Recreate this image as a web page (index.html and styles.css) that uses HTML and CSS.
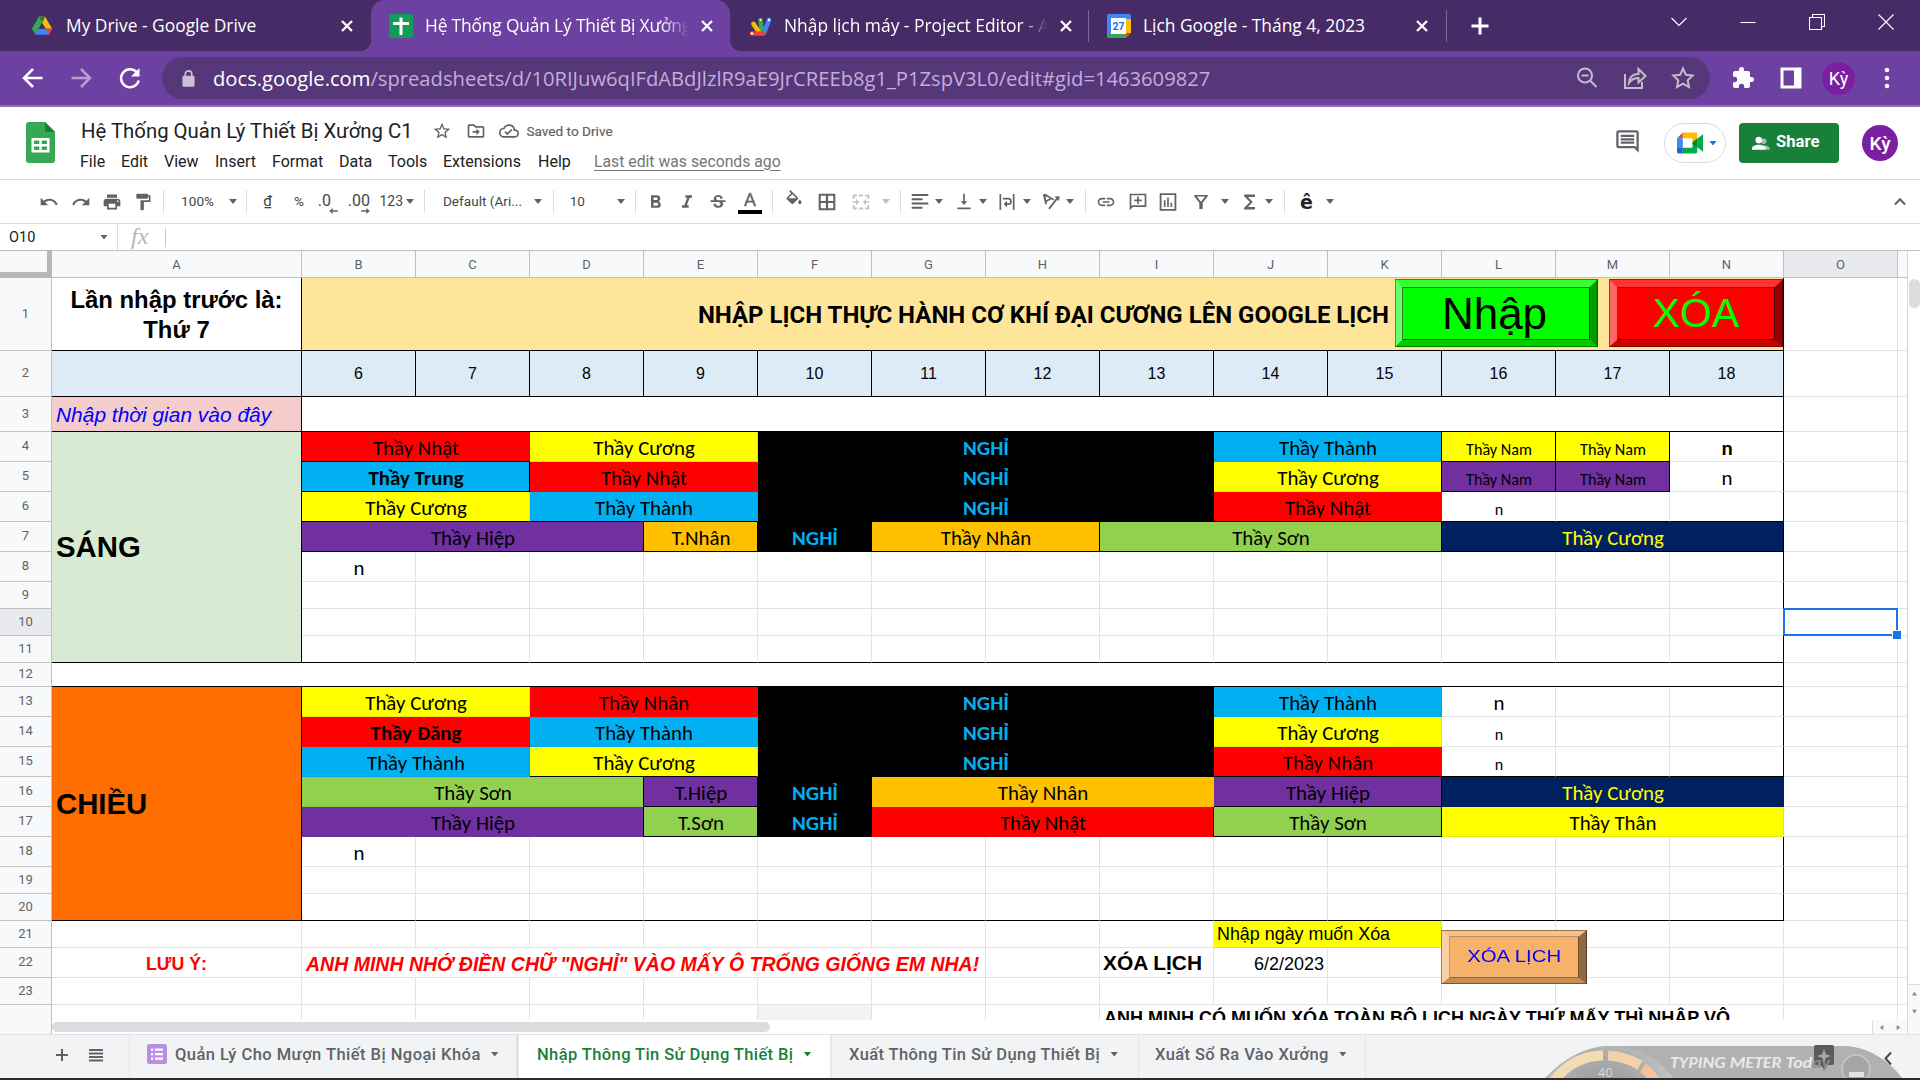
FILE: index.html
```
<!DOCTYPE html>
<html lang="vi">
<head>
<meta charset="utf-8">
<title>Hệ Thống Quản Lý Thiết Bị Xưởng C1</title>
<link rel="stylesheet" href="styles.css">
</head>
<body>
<div class="tabstrip">
  <div class="tab first">
    <svg class="fav" viewBox="0 0 24 24"><path fill="#34a853" d="M8.5 2h3.5l3.6 6.500-3.600 0L4.600 21 1 15z"/><path fill="#fbbc04" d="M8.500 2h7L23 15h-7z"/><path fill="#4285f4" d="M8 15h15l-3.500 6.500h-15z"/><path fill="#ea4335" d="M16 15h7l-3.500 6.500z"/><path fill="#188038" d="M8.500 2h7L12 8.500z"/><path fill="#472b66" d="M12 9.500l3 5.500H9z"/></svg>
    <span class="tt">My Drive - Google Drive</span>
    <svg class="x" viewBox="0 0 14 14"><path d="M2 2l10 10M12 2L2 12"/></svg>
  </div>
  <div class="tab active">
    <svg class="fav" viewBox="0 0 24 24"><rect width="24" height="24" rx="2.500" fill="#109d58"/><path fill="#fff" d="M10.500 3.500h3v4.500H20v3h-6.500v10h-3V11H4V8h6.500z"/></svg>
    <span class="tt fade tight">Hệ Thống Quản Lý Thiết Bị Xưởng</span>
    <svg class="x" viewBox="0 0 14 14"><path d="M2 2l10 10M12 2L2 12"/></svg>
  </div>
  <div class="tab line">
    <svg class="fav" viewBox="0 0 24 24"><g stroke-linecap="round" stroke-width="4.600" fill="none"><path stroke="#4285f4" d="M16 19L21 6"/><path stroke="#34a853" d="M14 18L12.500 6"/><path stroke="#fbbc04" d="M11 18L5.500 10"/><path stroke="#ea4335" d="M4 19.500h11"/></g><g fill="#fff"><circle cx="21" cy="6" r="1.200"/><circle cx="12.500" cy="6" r="1"/><circle cx="4" cy="19.500" r="1.200"/></g></svg>
    <span class="tt fade">Nhập lịch máy - Project Editor - A</span>
    <svg class="x" viewBox="0 0 14 14"><path d="M2 2l10 10M12 2L2 12"/></svg>
  </div>
  <div class="tab line">
    <svg class="fav" viewBox="0 0 24 24"><path fill="#4285f4" d="M2 0h20a2 2 0 0 1 2 2v3H5v19H2a2 2 0 0 1-2-2V2a2 2 0 0 1 2-2z"/><path fill="#34a853" d="M0 19h19v5H2a2 2 0 0 1-2-2z"/><path fill="#fbbc04" d="M19 5h5v14h-5z"/><path fill="#ea4335" d="M19 19h5l-5 5z"/><path fill="#fff" d="M4 4h15v16H4z"/><text x="11.500" y="16" text-anchor="middle" font-family="Roboto,sans-serif" font-weight="700" font-size="10.500" fill="#1a73e8">27</text></svg>
    <span class="tt">Lịch Google - Tháng 4, 2023</span>
    <svg class="x" viewBox="0 0 14 14"><path d="M2 2l10 10M12 2L2 12"/></svg>
  </div>
  <svg class="plus" viewBox="0 0 20 20"><path d="M10 1.500v17M1.500 10h17"/></svg>
  <div class="win">
    <svg viewBox="0 0 16 16"><path d="M.5 4L8 11.500 15.500 4"/></svg>
    <svg viewBox="0 0 16 16"><path d="M.5 8.500h15"/></svg>
    <svg viewBox="0 0 16 16"><path d="M.5 3.500h12v12H.5zM3.500 3.500v-3h12v12h-3"/></svg>
    <svg viewBox="0 0 16 16"><path d="M.5.500l15 15M15.500.500l-15 15"/></svg>
  </div>
</div>
<div class="nav">
  <svg class="w" viewBox="0 0 24 24"><path d="M21.500 12H3.500M12 3L3 12l9 9"/></svg>
  <svg class="w dim" viewBox="0 0 24 24"><path d="M2.500 12h18M12 3l9 9-9 9"/></svg>
  <svg class="w" viewBox="0 0 24 24"><path d="M19 6.500A9 9 0 1 0 20.800 14.500"/><path d="M21.500 2v8.500H13z" class="solid"/></svg>
  <div class="url">
    <svg class="lock" viewBox="0 0 14 20"><path fill="#c9c0d6" d="M2 7h10a1.500 1.500 0 0 1 1.500 1.500v9A1.500 1.500 0 0 1 12 19H2a1.500 1.500 0 0 1-1.500-1.500v-9A1.500 1.500 0 0 1 2 7z"/><path fill="none" stroke="#c9c0d6" stroke-width="1.800" d="M3.500 8V5.200a3.500 3.500 0 0 1 7 0V8"/></svg>
    <span class="addr"><b>docs.google.com</b>/spreadsheets/d/10RIJuw6qIFdABdJlzlR9aE9JrCREEb8g1_P1ZspV3L0/edit#gid=1463609827</span>
    <svg class="u" viewBox="0 0 24 24"><circle cx="10" cy="9.500" r="7"/><path d="M15.500 15l6 6M6.500 9.500h7"/></svg>
    <svg class="u" viewBox="0 0 24 24"><path d="M2 8v14h17v-6M6 17c.5-6 4-9 9.500-9V3l7 7-7 6.500V12c-4 0-7 1.500-9.500 5z"/></svg>
    <svg class="u" viewBox="0 0 24 24"><path d="M12 2.500l2.900 6.300 6.800.8-5 4.700 1.300 6.800L12 17.700 6 21.100l1.300-6.800-5-4.700 6.800-.8z"/></svg>
  </div>
  <svg class="f" viewBox="0 0 24 24"><path d="M20.500 11H19V7c0-1.100-.9-2-2-2h-4V3.500a2.500 2.500 0 0 0-5 0V5H4c-1.100 0-2 .9-2 2v3.800h1.500a2.700 2.700 0 0 1 0 5.400H2V20c0 1.100.9 2 2 2h3.800v-1.500a2.700 2.700 0 0 1 5.400 0V22H17c1.100 0 2-.9 2-2v-4h1.500a2.500 2.500 0 0 0 0-5z"/></svg>
  <svg class="f" viewBox="0 0 24 24"><path fill-rule="evenodd" d="M1.500 1.500h21v21h-21zM4.500 4.500v15H15v-15z"/></svg>
  <div class="av small">Kỳ</div>
  <svg class="f" viewBox="0 0 24 24"><circle cx="12" cy="4" r="2.300"/><circle cx="12" cy="12" r="2.300"/><circle cx="12" cy="20" r="2.300"/></svg>
</div>
<div class="dochead">
  <svg class="logo" viewBox="0 0 29 41"><path fill="#34a853" d="M3 0h16l10 10v28a3 3 0 0 1-3 3H3a3 3 0 0 1-3-3V3a3 3 0 0 1 3-3z"/><path fill="#188038" d="M19 0l10 10H19z"/><path fill="#fff" fill-rule="evenodd" d="M5.500 16h18v14.500h-18zM8 18.500v3.500h5.300v-3.500zM15.700 18.500v3.500H21v-3.500zM8 24.500V28h5.300v-3.500zM15.700 24.500V28H21v-3.500z"/></svg>
  <div class="docmid">
    <div class="trow">
      <span class="dtitle">Hệ Thống Quản Lý Thiết Bị Xưởng C1</span>
      <svg class="g" viewBox="0 0 24 24"><path d="M22 9.240l-7.190-.62L12 2 9.190 8.630 2 9.240l5.460 4.730L5.820 21 12 17.270 18.180 21l-1.630-7.030L22 9.240zM12 15.400l-3.760 2.270 1-4.280-3.320-2.880 4.380-.38L12 6.100l1.710 4.040 4.380.38-3.320 2.880 1 4.280L12 15.400z"/></svg>
      <svg class="g" viewBox="0 0 24 24"><path d="M20 6h-8l-2-2H4c-1.100 0-2 .9-2 2v12c0 1.100.9 2 2 2h16c1.100 0 2-.9 2-2V8c0-1.100-.9-2-2-2zm0 12H4V6h5.170l2 2H20v10zm-7.500-1l4-4-4-4v3H8v2h4.500z"/></svg>
      <svg class="g" viewBox="0 0 24 24"><path d="M19.350 10.040A7.490 7.490 0 0 0 12 4C9.110 4 6.600 5.640 5.350 8.040A5.990 5.990 0 0 0 0 14c0 3.310 2.690 6 6 6h13c2.760 0 5-2.240 5-5 0-2.640-2.050-4.780-4.650-4.960zM19 18H6a4 4 0 0 1 0-8h.71a5.500 5.500 0 0 1 10.790 1.500v.5H19a3 3 0 0 1 0 6zm-9-3.820l-2.090-2.090L6.500 13.500 10 17l6.010-6.010-1.410-1.410z"/></svg>
      <span class="saved">Saved to Drive</span>
    </div>
    <div class="menus"><span>File</span><span>Edit</span><span>View</span><span>Insert</span><span>Format</span><span>Data</span><span>Tools</span><span>Extensions</span><span>Help</span><span class="last">Last edit was seconds ago</span></div>
  </div>
  <div class="docright">
    <svg class="cm" viewBox="0 0 24 24"><path fill="#5f6368" d="M21.990 4c0-1.100-.89-2-1.990-2H4c-1.100 0-2 .9-2 2v12c0 1.100.9 2 2 2h14l4 4-.01-18zM20 4v13.170L18.830 16H4V4h16zM6 12h12v2H6zm0-3h12v2H6zm0-3h12v2H6z"/></svg>
    <div class="meet"><svg viewBox="0 0 28 22"><path fill="#ea4335" d="M6 0v6H0z"/><path fill="#fbbc04" d="M6 0h13a2 2 0 0 1 2 2v7l-5 3V6H6z"/><path fill="#4285f4" d="M0 6h6v10H0z"/><path fill="#1967d2" d="M0 16h6v6H2a2 2 0 0 1-2-2z"/><path fill="#00ac47" d="M6 16h10v-5l5 3v6a2 2 0 0 1-2 2H6z"/><path fill="#00832d" d="M15.500 11L21 6v10z"/><path fill="#00ac47" d="M21 6.500L27 2v18l-6-4.500z"/></svg><i class="car blue"></i></div>
    <div class="share"><svg viewBox="0 0 20 16"><g fill="#fff"><g opacity=".55"><circle cx="13" cy="5.500" r="3"/><path d="M13 10c4 0 6.500 1.500 6.500 3.500V15H14z"/></g><circle cx="7.500" cy="4.200" r="3.700"/><path d="M0 15v-1.500C0 11 4 9.500 7.500 9.500S15 11 15 13.500V15z"/></g></svg>Share</div>
    <div class="av">Kỳ</div>
  </div>
</div>
<div class="tools">
  <svg viewBox="0 0 24 24"><path d="M12.500 8c-2.650 0-5.050.99-6.900 2.600L2 7v9h9l-3.620-3.620c1.390-1.160 3.160-1.880 5.120-1.880 3.540 0 6.550 2.310 7.600 5.500l2.370-.78C21.080 11.030 17.150 8 12.500 8z"/></svg>
  <svg viewBox="0 0 24 24"><path d="M18.400 10.600C16.550 8.990 14.150 8 11.500 8c-4.650 0-8.580 3.030-9.960 7.220L3.900 16a8.002 8.002 0 0 1 7.600-5.500c1.950 0 3.730.72 5.120 1.880L13 16h9V7l-3.600 3.600z"/></svg>
  <svg viewBox="0 0 24 24"><path d="M19 8H5c-1.660 0-3 1.340-3 3v6h4v4h12v-4h4v-6c0-1.660-1.340-3-3-3zm-3 11H8v-5h8v5zm3-7c-.55 0-1-.45-1-1s.45-1 1-1 1 .45 1 1-.45 1-1 1zm-1-9H6v4h12V3z"/></svg>
  <svg viewBox="0 0 24 24"><path d="M18 4V3c0-.55-.45-1-1-1H5c-.55 0-1 .45-1 1v4c0 .55.450 1 1 1h12c.55 0 1-.45 1-1V6h1v4H9v11c0 .55.450 1 1 1h2c.55 0 1-.45 1-1v-9h8V4h-3z"/></svg>
  <i class="sep"></i><span>100%</span><i class="car"></i><i class="sep"></i>
  <span class="dong">₫</span><span>%</span>
  <span class="dec">.0<svg viewBox="0 0 10 7"><path d="M4 0v2.500h6v2H4V7L0 3.500z"/></svg></span>
  <span class="dec">.00<svg viewBox="0 0 10 7"><path d="M6 0v2.500H0v2h6V7l4-3.500z"/></svg></span>
  <span class="n123">123</span><i class="car"></i><i class="sep"></i>
  <span>Default (Ari...</span><i class="car"></i><i class="sep"></i><span class="n10">10</span><i class="car"></i><i class="sep"></i>
  <svg viewBox="0 0 24 24"><path d="M15.600 10.790c.97-.67 1.650-1.770 1.650-2.790 0-2.260-1.750-4-4-4H6v15h8.040c2.090 0 3.710-1.700 3.710-3.790 0-1.520-.86-2.820-2.150-3.420zM9 6.500h3.500c.83 0 1.500.67 1.500 1.500s-.67 1.500-1.500 1.500H9v-3zm4 10H9v-3.500h4c.97 0 1.750.78 1.750 1.750S13.970 16.500 13 16.500z"/></svg>
  <svg viewBox="0 0 24 24"><path d="M10 4v3h2.210l-3.420 9H6v3h8v-3h-2.210l3.420-9H18V4z"/></svg>
  <svg viewBox="0 0 24 24"><path d="M7.240 9.750c-.26-.46-.4-1-.4-1.600 0-2.500 2.200-4.650 5.500-4.650 3 0 5.250 1.700 5.250 4.500h-2.900c0-1.300-.85-2.200-2.400-2.200-1.500 0-2.500.75-2.500 2 0 .9.700 1.500 1.900 1.950zM21 12v-2H3v2h9.620c1.700.6 2.500 1.300 2.500 2.500 0 1.300-1 2.100-2.700 2.100-1.900 0-3-.9-3-2.600H6.500c0 3.300 2.600 5 5.900 5 3.400 0 5.700-1.700 5.700-4.500 0-.95-.25-1.800-.75-2.500z"/></svg>
  <span class="acol">A</span><i class="sep"></i>
  <svg class="up" viewBox="0 0 24 24"><path d="M16.560 8.940L7.620 0 6.210 1.410l2.380 2.380-5.150 5.150a1.490 1.490 0 0 0 0 2.120l5.500 5.500c.29.290.68.440 1.060.44s.77-.15 1.060-.44l5.500-5.500c.59-.58.59-1.530 0-2.120zM5.210 10L10 5.210 14.790 10zM19 11.500s-2 2.170-2 3.500c0 1.100.9 2 2 2s2-.9 2-2c0-1.330-2-3.500-2-3.500z"/></svg>
  <svg viewBox="0 0 24 24"><path d="M2 2v20h20V2H2zm8.600 17.500H4.500v-6.200h6.100zm0-8.800H4.500V4.500h6.100zm8.900 8.800h-6.200v-6.200h6.200zm0-8.800h-6.200V4.500h6.200z"/></svg>
  <svg class="off" viewBox="0 0 24 24"><path d="M2 3h5v2.500H4.500V8H2zM9.500 3h5v2.500h-5zM17 3h5v5h-2.500V5.500H17zM2 16h2.500v2.500H7V21H2zM9.500 18.500h5V21h-5zM19.500 16H22v5h-5v-2.500h2.500zM2 11h4V8.500l4 3.500-4 3.500V13H2zM22 11h-4V8.500L14 12l4 3.500V13h4z"/></svg>
  <i class="car off"></i><i class="sep"></i>
  <svg viewBox="0 0 24 24"><path d="M2 2.500h20v2.200H2zM2 7.600h13v2.200H2zM2 12.700h20v2.200H2zM2 17.800h13V20H2z"/></svg><i class="car"></i>
  <svg viewBox="0 0 24 24"><path d="M16 11h-3V2h-2v9H8l4 4.500zM4 18.500v2.300h16v-2.300z"/></svg><i class="car"></i>
  <svg viewBox="0 0 24 24"><path d="M3 2.500h2v19H3zM19 2.500h2v19h-2zM7 7h6.500a4.200 4.200 0 0 1 0 8.500H12v3L8 14.500l4-4v3h1.500a2.200 2.200 0 0 0 0-4.500H7z"/></svg><i class="car"></i>
  <svg viewBox="0 0 24 24"><path d="M1 3l3 12 2-.6-.5-2.400L11.400 8.600l1.800 1.600 1.500-1.500L4 2zm3.200 2L9.500 7.500 5 10zM21 5l-6 .5 2 2L7.500 19.500l1.700 1.400L18.600 9l2 2z"/></svg><i class="car"></i><i class="sep"></i>
  <svg viewBox="0 0 24 24"><path d="M3.900 12c0-1.710 1.390-3.100 3.100-3.100h4V7H7c-2.760 0-5 2.240-5 5s2.240 5 5 5h4v-1.900H7c-1.710 0-3.100-1.390-3.100-3.100zM8 13h8v-2H8v2zm9-6h-4v1.900h4c1.710 0 3.100 1.390 3.100 3.100s-1.390 3.100-3.100 3.100h-4V17h4c2.760 0 5-2.240 5-5s-2.240-5-5-5z"/></svg>
  <svg viewBox="0 0 24 24"><path d="M22 2H2v20l4-4h16zM20 16H5.200L4 17.200V4h16zM11 5.500h2V9h3.500v2H13v3.500h-2V11H7.500V9H11z"/></svg>
  <svg viewBox="0 0 24 24"><path fill-rule="evenodd" d="M2 1.500h20v21H2zM4.200 3.700v16.600h15.600V3.700zM7 10h2v8H7zM11 6.500h2V18h-2zM15 13h2v5h-2z"/></svg>
  <svg viewBox="0 0 24 24"><path fill-rule="evenodd" d="M4 3.500h16v2L14 13v7.500h-4V13L4 5.500zM7 5.500l5 6.300 5-6.300z"/></svg><i class="car"></i>
  <svg viewBox="0 0 24 24"><path d="M18 3H5v2.200L12 12l-7 6.800V21h13v-3H9.500l5.800-6L9.500 6H18z"/></svg><i class="car"></i><i class="sep"></i>
  <span class="ee">ê</span><i class="car"></i>
  <svg viewBox="0 0 24 24"><path d="M12 7l-7 7 1.800 1.800L12 10.600l5.200 5.200L19 14z"/></svg>
</div>
<div class="fbar"><span class="nm">O10</span><i class="car"></i><i class="ln"></i><span class="fx">fx</span><i class="ln s"></i></div>
<div class="mid">
<div class="sheet">
  <b class="corner"></b><b class="ch">A</b><b class="ch">B</b><b class="ch">C</b><b class="ch">D</b><b class="ch">E</b><b class="ch">F</b><b class="ch">G</b><b class="ch">H</b><b class="ch">I</b><b class="ch">J</b><b class="ch">K</b><b class="ch">L</b><b class="ch">M</b><b class="ch">N</b><b class="ch sel">O</b><b class="ch nr"></b>

  <b class="rh">1</b><div class="c k big2">Lần nhập trước là:<br>Thứ 7</div><div class="c k s13 cream title">NHẬP LỊCH THỰC HÀNH CƠ KHÍ ĐẠI CƯƠNG LÊN GOOGLE LỊCH</div><i class="c"></i><i class="c nr"></i>
  <b class="rh">2</b><div class="c k ice"></div><div class="c k ice">6</div><div class="c k ice">7</div><div class="c k ice">8</div><div class="c k ice">9</div><div class="c k ice">10</div><div class="c k ice">11</div><div class="c k ice">12</div><div class="c k ice">13</div><div class="c k ice">14</div><div class="c k ice">15</div><div class="c k ice">16</div><div class="c k ice">17</div><div class="c k ice">18</div><i class="c"></i><i class="c nr"></i>
  <b class="rh">3</b><div class="c k pink">Nhập thời gian vào đây</div><div class="c k s13"></div><i class="c"></i><i class="c nr"></i>

  <b class="rh">4</b><div class="c k mint r8 big">SÁNG</div><div class="c t s2 red kb">Thầy Nhật</div><div class="c t s2 yel">Thầy Cương</div><div class="c t s4 blk">NGHỈ</div><div class="c t s2 sky kr">Thầy Thành</div><div class="c t yel k sm">Thầy Nam</div><div class="c t yel k sm">Thầy Nam</div><div class="c t kr bold">n</div><i class="c"></i><i class="c nr"></i>
  <b class="rh">5</b><div class="c t s2 sky k bold">Thầy Trung</div><div class="c t s2 red">Thầy Nhật</div><div class="c t s4 blk">NGHỈ</div><div class="c t s2 yel kr">Thầy Cương</div><div class="c t pur k sm">Thầy Nam</div><div class="c t pur k sm">Thầy Nam</div><div class="c t kr">n</div><i class="c"></i><i class="c nr"></i>
  <b class="rh">6</b><div class="c t s2 yel kb">Thầy Cương</div><div class="c t s2 sky kb">Thầy Thành</div><div class="c t s4 blk">NGHỈ</div><div class="c t s2 red kb">Thầy Nhật</div><div class="c t kb sm">n</div><i class="c kb"></i><i class="c k"></i><i class="c"></i><i class="c nr"></i>
  <b class="rh">7</b><div class="c t s3 pur k">Thầy Hiệp</div><div class="c t org k">T.Nhân</div><div class="c t blk">NGHỈ</div><div class="c t s2 org k">Thầy Nhân</div><div class="c t s3 grn k">Thầy Sơn</div><div class="c t s3 navy k">Thầy Cương</div><i class="c"></i><i class="c nr"></i>
  <b class="rh">8</b><div class="c t">n</div><i class="c"></i><i class="c"></i><i class="c"></i><i class="c"></i><i class="c"></i><i class="c"></i><i class="c"></i><i class="c"></i><i class="c"></i><i class="c"></i><i class="c"></i><i class="c kr"></i><i class="c"></i><i class="c nr"></i>
  <b class="rh">9</b><i class="c"></i><i class="c"></i><i class="c"></i><i class="c"></i><i class="c"></i><i class="c"></i><i class="c"></i><i class="c"></i><i class="c"></i><i class="c"></i><i class="c"></i><i class="c"></i><i class="c kr"></i><i class="c"></i><i class="c nr"></i>
  <b class="rh sel">10</b><i class="c"></i><i class="c"></i><i class="c"></i><i class="c"></i><i class="c"></i><i class="c"></i><i class="c"></i><i class="c"></i><i class="c"></i><i class="c"></i><i class="c"></i><i class="c"></i><i class="c kr"></i><i class="c cursor"></i><i class="c nr"></i>
  <b class="rh">11</b><i class="c kb"></i><i class="c kb"></i><i class="c kb"></i><i class="c kb"></i><i class="c kb"></i><i class="c kb"></i><i class="c kb"></i><i class="c kb"></i><i class="c kb"></i><i class="c kb"></i><i class="c kb"></i><i class="c kb"></i><i class="c k"></i><i class="c"></i><i class="c nr"></i>
  <b class="rh">12</b><div class="c k s14"></div><i class="c"></i><i class="c nr"></i>

  <b class="rh">13</b><div class="c k tang r8 big">CHIỀU</div><div class="c t s2 yel">Thầy Cương</div><div class="c t s2 red">Thầy Nhân</div><div class="c t s4 blk">NGHỈ</div><div class="c t s2 sky">Thầy Thành</div><div class="c t">n</div><i class="c"></i><i class="c kr"></i><i class="c"></i><i class="c nr"></i>
  <b class="rh">14</b><div class="c t s2 red bold">Thầy Đăng</div><div class="c t s2 sky">Thầy Thành</div><div class="c t s4 blk">NGHỈ</div><div class="c t s2 yel">Thầy Cương</div><div class="c t sm">n</div><i class="c"></i><i class="c kr"></i><i class="c"></i><i class="c nr"></i>
  <b class="rh">15</b><div class="c t s2 sky">Thầy Thành</div><div class="c t s2 yel hk">Thầy Cương</div><div class="c t s4 blk">NGHỈ</div><div class="c t s2 red kb">Thầy Nhân</div><div class="c t kb sm">n</div><i class="c kb"></i><i class="c k"></i><i class="c"></i><i class="c nr"></i>
  <b class="rh">16</b><div class="c t s3 grn kr">Thầy Sơn</div><div class="c t pur k">T.Hiệp</div><div class="c t blk">NGHỈ</div><div class="c t s3 org">Thầy Nhân</div><div class="c t s2 pur k">Thầy Hiệp</div><div class="c t s3 navy">Thầy Cương</div><i class="c"></i><i class="c nr"></i>
  <b class="rh">17</b><div class="c t s3 pur kr">Thầy Hiệp</div><div class="c t grn k">T.Sơn</div><div class="c t blk">NGHỈ</div><div class="c t s3 red kr">Thầy Nhật</div><div class="c t s2 grn k">Thầy Sơn</div><div class="c t s3 yel">Thầy Thân</div><i class="c"></i><i class="c nr"></i>
  <b class="rh">18</b><div class="c t">n</div><i class="c"></i><i class="c"></i><i class="c"></i><i class="c"></i><i class="c"></i><i class="c"></i><i class="c"></i><i class="c"></i><i class="c"></i><i class="c"></i><i class="c"></i><i class="c kr"></i><i class="c"></i><i class="c nr"></i>
  <b class="rh">19</b><i class="c"></i><i class="c"></i><i class="c"></i><i class="c"></i><i class="c"></i><i class="c"></i><i class="c"></i><i class="c"></i><i class="c"></i><i class="c"></i><i class="c"></i><i class="c"></i><i class="c kr"></i><i class="c"></i><i class="c nr"></i>
  <b class="rh">20</b><i class="c kb"></i><i class="c kb"></i><i class="c kb"></i><i class="c kb"></i><i class="c kb"></i><i class="c kb"></i><i class="c kb"></i><i class="c kb"></i><i class="c kb"></i><i class="c kb"></i><i class="c kb"></i><i class="c kb"></i><i class="c k"></i><i class="c"></i><i class="c nr"></i>

  <b class="rh">21</b><i class="c"></i><i class="c"></i><i class="c"></i><i class="c"></i><i class="c"></i><i class="c"></i><i class="c"></i><i class="c"></i><i class="c"></i><div class="c s2 yel del">Nhập ngày muốn Xóa</div><i class="c"></i><i class="c"></i><i class="c"></i><i class="c"></i><i class="c nr"></i>
  <b class="rh">22</b><div class="c note">LƯU Ý:</div><div class="c s6 warn">ANH MINH NHỚ ĐIỀN CHỮ "NGHỈ" VÀO MẤY Ô TRỐNG GIỐNG EM NHA!</div><i class="c"></i><div class="c xl">XÓA LỊCH</div><div class="c date">6/2/2023</div><i class="c"></i><i class="c"></i><i class="c"></i><i class="c"></i><i class="c"></i><i class="c nr"></i>
  <b class="rh">23</b><i class="c"></i><i class="c"></i><i class="c"></i><i class="c"></i><i class="c"></i><i class="c"></i><i class="c"></i><i class="c"></i><i class="c"></i><i class="c"></i><i class="c"></i><i class="c"></i><i class="c"></i><i class="c"></i><i class="c"></i><i class="c nr"></i>
  <b class="rh nb"></b><i class="c nb"></i><i class="c nb"></i><i class="c nb"></i><i class="c nb"></i><i class="c nb"></i><i class="c nb gray"></i><i class="c nb"></i><i class="c nb"></i><div class="c nb s6 ask">ANH MINH CÓ MUỐN XÓA TOÀN BỘ LỊCH NGÀY THỨ MẤY THÌ NHẬP VÔ</div><i class="c nb"></i><i class="c nb nr"></i>

  <div class="bevel nhap">Nhập</div>
  <div class="bevel xoa">XÓA</div>
  <div class="bevel lich"><span>XÓA LỊCH</span></div>
  <div class="selbox"><i></i></div>
</div>
<div class="vbar"><i class="vth"></i><div class="arrs"><svg viewBox="0 0 10 8"><path d="M5 1l4 6H1z"/></svg><svg viewBox="0 0 10 8"><path d="M5 7l4-6H1z"/></svg></div></div>
</div>
<div class="hbar"><div class="htrack"><i></i></div><div class="harr"><svg viewBox="0 0 8 10"><path d="M1 5l6-4v8z"/></svg><svg viewBox="0 0 8 10"><path d="M7 5L1 1v8z"/></svg></div><div class="hend"></div></div>
<div class="stabs">
  <div class="ctl"><svg viewBox="0 0 16 16"><path d="M7 2h2v5h5v2H9v5H7V9H2V7h5z"/></svg><svg viewBox="0 0 14 14"><path d="M0 1h14v2H0zM0 4.500h14v2H0zM0 8h14v2H0zM0 11.500h14v2H0z"/></svg></div>
  <div class="st t1"><svg class="form" viewBox="0 0 20 20"><rect width="20" height="20" rx="2" fill="#b88fe3"/><path fill="#fff" d="M4 4.500h2.200v2.200H4zM8 4.500h8v2.200H8zM4 9h2.200v2.200H4zM8 9h8v2.200H8zM4 13.500h2.200v2.200H4zM8 13.500h8v2.200H8z"/></svg>Quản Lý Cho Mượn Thiết Bị Ngoại Khóa<i class="car"></i></div>
  <div class="st t2">Nhập Thông Tin Sử Dụng Thiết Bị<i class="car"></i></div>
  <div class="st t3">Xuất Thông Tin Sử Dụng Thiết Bị<i class="car"></i></div>
  <div class="st t4">Xuất Sổ Ra Vào Xưởng<i class="car"></i></div>
  <svg class="meter" viewBox="0 0 365 33"><defs><radialGradient id="dial" gradientUnits="userSpaceOnUse" cx="60" cy="54" r="68"><stop offset="0" stop-color="#909193"/><stop offset=".72" stop-color="#aeb0b1"/><stop offset="1" stop-color="#bfc1c3"/></radialGradient></defs><path fill="#b0b1b3" d="M0 33C20 12 42 2 62 1H300C325 2 346 18 357 33z"/><path fill="url(#dial)" d="M0 33C20 12 42 2 62 1c30 0 50 12 66 32z"/><path fill="none" stroke="#f2dcb2" stroke-width="10" d="M9 36C21 20 38 11 58 10.500"/><path fill="none" stroke="#f4d2a8" stroke-width="10" d="M63 10.500c12 .5 22 4 32 9.500"/><path fill="none" stroke="#f5c29e" stroke-width="10" d="M98 23c6 4 9 8 13 13"/><text x="60.500" y="32" text-anchor="middle" font-family="Open Sans,sans-serif" font-size="12.500" fill="#dcdcdc">40</text><circle cx="311" cy="24" r="14" fill="#a5a6a8" stroke="#c6c7c9" stroke-width="1.500"/><rect x="304" y="27" width="15" height="5" fill="#e3e3e4"/><path fill="#5b5c5e" d="M271 0h16a2 2 0 0 1 2 2v16a2 2 0 0 1-2 2h-4l-4 4-4-4h-4a2 2 0 0 1-2-2V2a2 2 0 0 1 2-2z"/><path fill="#a7a8aa" d="M279 4l1.800 5.200L286 11l-5.200 1.800L279 18l-1.800-5.200L272 11l5.200-1.800z"/><text class="mt" x="125" y="22.500" textLength="160" lengthAdjust="spacingAndGlyphs">TYPING METER Tod<tspan class="faint">ay</tspan></text><path fill="none" stroke="#444649" stroke-width="2" d="M346 7.500l-5.500 6 5.500 6"/></svg>
</div>
<div class="taskbar"></div>
</body>
</html>
```
FILE: styles.css
```
* { box-sizing: border-box; }
body { margin: 0; width: 1920px; height: 1080px; overflow: hidden; display: flex; flex-direction: column; background: #fff; color: #000; font-family: Roboto, "Liberation Sans", sans-serif; }
svg { display: block; flex: none; }
i { font-style: normal; }

/* browser tab strip */
.tabstrip { height: 51px; background: #462b66; display: flex; flex: none; color: #fff; font: 17.4px "Open Sans", "Noto Sans", sans-serif; }
.tab { width: 359px; height: 51px; display: flex; align-items: center; padding: 0 17px 0 18px; position: relative; }
.tab.first { margin-left: 12px; }
.tab.active { background: #6d41a1; border-radius: 14px 14px 0 0; }
.tab.active::before, .tab.active::after { content: ""; position: absolute; bottom: 0; width: 10px; height: 10px; }
.tab.active::before { left: -10px; background: radial-gradient(circle at 0 0, transparent 9.5px, #6d41a1 10px); }
.tab.active::after { right: -10px; background: radial-gradient(circle at 100% 0, transparent 9.5px, #6d41a1 10px); }
.tab.line { border-right: 1px solid #7d6a94; border-image: linear-gradient(transparent 11px, #7d6a94 11px, #7d6a94 41px, transparent 41px) 1; }
.tab.line + .tab.line { width: 358px; }
.fav { width: 24px; height: 24px; }
.first .fav { width: 22px; height: 22px; margin: 0 1px; }
.tt { margin-left: 12px; width: 264px; white-space: nowrap; padding-bottom: 1px; }
.tt.tight { letter-spacing: -.17px; }
.tt.fade { -webkit-mask-image: linear-gradient(90deg, #000 236px, transparent 264px); mask-image: linear-gradient(90deg, #000 236px, transparent 264px); }
.x { width: 14px; height: 14px; margin-left: 11px; stroke: #fff; stroke-width: 2.3; fill: none; }
.plus { width: 20px; height: 20px; margin: 16px 0 0 23px; stroke: #fff; stroke-width: 3; }
.win { margin-left: auto; padding: 14px 26px 0 0; display: flex; gap: 53px; }
.win svg { width: 16px; height: 16px; stroke: #fff; fill: none; stroke-width: 1.1; }

/* address row */
.nav { height: 56px; flex: none; background: #6d41a1; border-bottom: 2px solid #9069bd; display: grid; grid-template-columns: 45px 48px 49px 1568px 45px 48px 52px 44px; justify-items: end; align-items: center; }
.nav > svg { width: 24px; height: 24px; }
.w { fill: none; stroke: #fff; stroke-width: 2.5; }
.w .solid { fill: #fff; stroke: none; }
.w.dim { opacity: .5; }
.f { fill: #fff; }
.url { width: 1548px; height: 42px; border-radius: 21px; background: #56377a; display: flex; align-items: center; padding: 0 15px 0 20px; }
.lock { width: 13px; height: 19px; }
.addr { margin-left: 18px; width: 1200px; font: 20.18px "Open Sans", "Noto Sans", sans-serif; color: #c1aedb; white-space: nowrap; margin-right: auto; }
.addr b { color: #fff; font-weight: 400; }
.u { width: 24px; height: 24px; margin-left: 24px; fill: none; stroke: #c3bccb; stroke-width: 2; }
.av { width: 36px; height: 36px; border-radius: 50%; background: #7b1fa2; color: #fff; font-size: 19px; font-weight: 500; display: flex; align-items: center; justify-content: center; }
.av.small { width: 33px; height: 33px; font-size: 18px; font-weight: 400; }

/* document header */
.dochead { height: 73px; flex: none; display: flex; border-bottom: 1px solid #dadada; padding-left: 26px; }
.logo { width: 29px; height: 41px; margin-top: 15px; }
.docmid { margin-left: 25px; padding-top: 8px; }
.trow { height: 32px; display: flex; align-items: center; color: #202124; }
.dtitle { font-size: 20.350px; width: 352px; padding-left: 1px; white-space: nowrap; }
.g { width: 20px; height: 20px; fill: #5f6368; margin-right: 13.500px; }
.saved { font-size: 13.600px; color: #5f6368; margin-left: -6px; padding-bottom: 1px; -webkit-text-stroke: .2px #5f6368; }
.menus { height: 28px; display: grid; grid-template-columns: 41px 43px 51px 57px 67px 49px 55px 95px 56px auto; align-items: center; font-size: 16px; color: #202124; white-space: nowrap; }
.menus .last { font-size: 15.780px; color: #757575; text-decoration: underline; text-underline-offset: 3px; }
.docright { margin-left: auto; display: flex; padding: 16px 22px 0 0; }
.cm { width: 27px; height: 27px; margin: 5px 23px 0 0; }
.meet { width: 62px; height: 40px; border: 1px solid #dadce0; border-radius: 20px; display: flex; align-items: center; padding-left: 12px; }
.meet svg { width: 27px; height: 22px; margin-right: 5px; }
.share { width: 100px; height: 40px; margin: 0 23px 0 13px; background: #188038; border-radius: 4px; color: #fff; font-weight: 700; font-size: 16.700px; display: flex; align-items: center; padding: 0 0 3px 13px; }
.share svg { width: 18px; height: 15px; margin: 3px 6px 0 0; }
.docright .av { margin-top: 2px; }
.car { width: 8px; height: 5px; background: #5f6368; clip-path: polygon(0 0, 100% 0, 50% 100%); flex: none; }
.car.blue { background: #1a73e8; }
.car.off { background: #bdbfc1; }

/* toolbar: each track ends at its control's right edge */
.tools { height: 44px; flex: none; border-bottom: 1px solid #dadada; display: grid; align-items: center; justify-items: end; white-space: nowrap; font-size: 13.600px; color: #444746;
  grid-template-columns: 60px 32px 31px 31px 10px 50px 23px 10px 25px 32px 35px 32px 32px 11px 11px 97px 20px 12px 31px 40px 11px 31px 31px 31px 33px 11px 32px 33px 34px 18px 11px 30px 12px 32px 12px 31px 13px 32px 11px 12px 31px 32px 30px 33px 17px 32px 12px 12px 32px 17px 577px; }
.tools > span { margin-top: -2px; }
.tools > svg { width: 22px; height: 20px; fill: #5f6368; }
.tools > svg.off { fill: #c2c4c6; }
.tools > svg.up { margin-top: -3px; }
.sep { width: 1px; height: 23px; background: #dadce0; }
.tools span.dong { font-size: 15px; }
.dec { font-size: 16px; line-height: 20px; position: relative; }
.tools .dec { margin-right: 8px; }
.tools .dec + .dec { margin-right: 1px; }
.dec svg { position: absolute; right: -7px; bottom: -3px; width: 9px; height: 6px; fill: #5f6368; }
.dec + .dec svg { right: 0; }
.n123 { font-size: 14px; }
.tools .acol { width: 24px; border-bottom: 4px solid #000; text-align: center; font-size: 19px; line-height: 21px; margin-top: 0; color: #5f6368; -webkit-text-stroke: .3px #5f6368; }
.tools .ee { font: 700 19px "DejaVu Sans", sans-serif; line-height: 22px; padding-right: 4px; color: #222; margin-top: 0; }

/* name box and formula */
.fbar { height: 26px; flex: none; display: flex; align-items: center; padding-left: 9px; font-size: 14.500px; color: #202124; }
.nm { width: 91px; }
.ln { width: 1px; height: 26px; background: #dadce0; margin-left: 9px; }
.ln.s { height: 19px; margin-left: 13px; background: #c9cbce; }
.fx { font: italic 24px "Liberation Serif", serif; color: #b5b7ba; width: 21px; margin: -3px 0 0 13px; line-height: 24px; }

/* spreadsheet */
.mid { height: 770px; flex: none; display: flex; }
.sheet { width: 1907px; position: relative; overflow: hidden; display: grid; grid-template-columns: 52px 250px repeat(14, 114px) 9px; grid-template-rows: 28px 73px 46px 35px repeat(5, 30px) repeat(3, 27px) 24px repeat(6, 30px) repeat(3, 27px) 30px 27px 15px; }
.corner, .ch, .rh { background: #f8f9fa; font-weight: 400; font-size: 13px; color: #5f6368; display: flex; align-items: center; justify-content: center; border: 0 solid #c0c0c0; border-width: 0 1px 1px 0; }
.corner { border: solid #b7b7b7; border-width: 1px 5px 6px 0; }
.ch { border-top-width: 1px; }
.rh { padding-bottom: 2px; }
.ch.sel, .rh.sel { background: #e8eaed; }
.c { border: 0 solid #e2e3e3; border-width: 0 1px 1px 0; display: flex; align-items: center; justify-content: center; min-width: 0; min-height: 0; white-space: nowrap; font-family: "Liberation Sans", sans-serif; font-size: 16px; line-height: 20px; }
.nr { border-right-width: 0; }
.nb { border-bottom-width: 0; }
.t { font-family: Carlito, Lato, sans-serif; font-size: 20.9px; line-height: 24px; align-items: flex-end; padding: 0 0 1px 1px; }
.t.sm { font-size: 16.200px; line-height: 22px; padding-bottom: 0; }
.t.bold { font-weight: 700; }
.s2 { grid-column: span 2; } .s3 { grid-column: span 3; } .s4 { grid-column: span 4; } .s6 { grid-column: span 6; } .s13 { grid-column: span 13; } .s14 { grid-column: span 14; }
.r8 { grid-row: span 8; }
.red { background: #f00; border-color: #f00; }
.yel { background: #ff0; border-color: #e9e900; }
.sky { background: #00b0f0; border-color: #00a5e3; }
.pur { background: #7030a0; border-color: #7030a0; }
.org { background: #ffc000; border-color: #ffc000; }
.grn { background: #92d050; border-color: #85c345; }
.navy { background: #002060; border-color: #002060; color: #ff0; }
.blk { background: #000; border-color: #000; color: #00b0f0; font-weight: 700; font-size: 20.900px; }
.cream { background: #ffe599; }
.ice { background: #ddebf7; }
.pink { background: #f4cccc; color: #00f; font-style: italic; font-size: 20.950px; justify-content: flex-start; padding: 2px 0 0 4px; }
.mint { background: #d9ead3; }
.tang { background: #ff6d01; }
.big { font-size: 29.330px; font-weight: 700; justify-content: flex-start; padding-left: 4px; }
.big2 { font-size: 23.900px; font-weight: 700; line-height: 30px; text-align: center; padding-top: 2px; }
.title { font: 700 24px Roboto, sans-serif; justify-content: flex-end; padding: 2px 394px 0 0; }
.k { border-color: #000; }
.kb, .hk { border-bottom-color: #000; }
.kr { border-right-color: #000; }
.del { font-size: 17.900px; justify-content: flex-start; padding-left: 3px; }
.note { color: #f00; font-weight: 700; font-size: 17.700px; padding-top: 3px; }
.warn { color: #f00; font-weight: 700; font-style: italic; font-size: 19.500px; justify-content: flex-start; padding: 2px 0 0 4px; }
.xl { font-weight: 700; font-size: 20.900px; justify-content: flex-start; padding: 1px 0 0 3px; }
.date { font-size: 18px; justify-content: flex-end; padding: 3px 3px 0 0; }
.ask { font-weight: 700; font-size: 18px; justify-content: flex-start; align-items: flex-start; padding-left: 4px; padding-top: 3px; overflow: hidden; }
.gray { background: #f1f3f4; }

/* drawn buttons float above the cells */
.bevel { position: absolute; border-style: solid; display: flex; align-items: center; justify-content: center; font-family: "Liberation Sans", sans-serif; line-height: 1; outline-offset: -1px; outline: 1px solid rgba(0, 0, 0, .4); }
.bevel::before { content: ""; position: absolute; inset: -1px; border: 1px solid rgba(0, 0, 0, .5); }
.nhap { left: 1395px; top: 29px; width: 203px; height: 68px; background: #0f0; border-width: 9px 9px 8px 8px; border-color: #3f3 #090 #0c0 #6f6; font-size: 44px; padding: 1px 3px 0 0; }
.xoa { left: 1609px; top: 29px; width: 174px; height: 68px; background: #f00; border-width: 9px 9px 8px 9px; border-color: #f33 #900 #c00 #f66; font-size: 41px; color: #0f0; padding-top: 0; }
.lich { left: 1441px; top: 680px; width: 146px; height: 54px; background: #f6b26b; border-width: 7px 9px; border-color: #f8c189 #916840 #c48e56 #fad1a6; font-size: 15.700px; color: #00f; }
.lich span { transform: scaleX(1.3); white-space: nowrap; }
.lich::before { border-color: rgba(0, 0, 0, .25); }
.selbox { position: absolute; left: 1783px; top: 358px; width: 115px; height: 28px; border: 2px solid #1a73e8; }
.selbox i { position: absolute; right: -5px; bottom: -5px; width: 8px; height: 8px; background: #1a73e8; box-shadow: -1px -1px 0 #fff; }

/* scroll bars */
.vbar { width: 13px; border-left: 1px solid #d5d7da; border-top: 1px solid #c0c0c0; display: flex; flex-direction: column; justify-content: space-between; padding-top: 28px; }
.vth { width: 11px; height: 29px; border-radius: 6px; background: #dadce0; margin-left: 1px; }
.arrs { height: 36px; background: #f8f9fa; border-top: 1px solid #dadce0; display: flex; flex-direction: column; justify-content: space-around; align-items: center; }
.arrs svg { width: 7px; height: 5px; fill: #8a8c8f; }
.hbar { height: 14px; flex: none; display: flex; }
.htrack { width: 1872px; padding: 2px 0 0 52px; background: linear-gradient(90deg, #f8f9fa 51px, #c0c0c0 51px, #c0c0c0 52px, #fff 52px); }
.htrack i { display: block; width: 718px; height: 10px; border-radius: 5px; background: #dadce0; }
.harr { width: 35px; display: flex; justify-content: space-around; align-items: center; border-left: 1px solid #dadce0; background: #f8f9fa; }
.harr svg { width: 5px; height: 7px; fill: #8a8c8f; }
.hend { flex: 1; background: #f8f9fa; border-left: 1px solid #dadce0; }

/* sheet tabs */
.stabs { height: 44px; flex: none; background: #f1f3f4; border-top: 1px solid #e0e2e4; display: flex; position: relative; overflow: hidden; font-size: 16.500px; font-weight: 500; letter-spacing: .4px; color: #5f6368; }
.ctl { width: 129px; display: flex; align-items: center; padding: 0 0 4px 54px; gap: 19px; }
.ctl svg { width: 16px; height: 16px; fill: #5f6368; }
.ctl svg + svg { width: 14px; height: 14px; }
.st { display: flex; align-items: center; border-left: 1px solid #e3e5e8; white-space: nowrap; padding-bottom: 5px; }
.st .car { margin-left: 10px; }
.t1 { width: 389px; padding-left: 17px; letter-spacing: .46px; }
.form { width: 20px; height: 20px; margin-right: 8px; }
.t2 { width: 312px; padding-left: 18px; background: #fff; color: #188038; box-shadow: 0 0 3px rgba(0, 0, 0, .25); }
.t2 .car { background: #188038; }
.t3 { width: 308px; padding-left: 18px; }
.t4 { width: 228px; padding-left: 16px; border-right: 1px solid #e3e5e8; }
.meter { position: absolute; left: 1545px; top: 10px; width: 365px; height: 33px; }
.mt { font: italic 700 16.500px Carlito, "Open Sans", sans-serif; fill: #e8e8e9; letter-spacing: 0; }
.faint { fill: #8d8e90; }
.taskbar { height: 2px; background: #2b2b2e; }
```
